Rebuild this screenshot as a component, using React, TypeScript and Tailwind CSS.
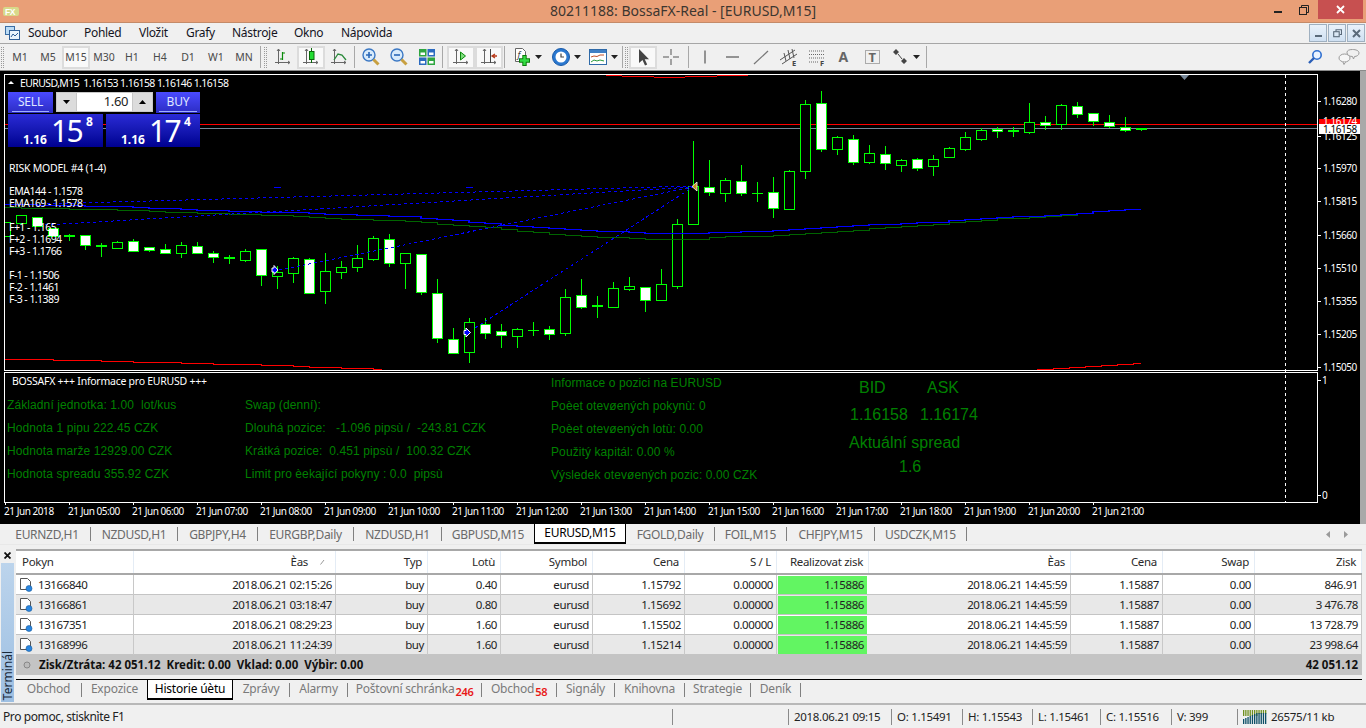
import React from "react";

type C = [number, number, number, number, string];
const candles: C[] = [
  [222,236,222,236,"h"],[215,223,215,223,"h"],[217,226,217,226,"w"],[228,236,228,236,"w"],[235,237,234,241,"d"],[235,245,235,250,"w"],[245,247,243,257,"d"],[242,248,241,249,"h"],[241,251,239,252,"w"],[247,250,247,252,"w"],[249,253,244,253,"w"],[245,253,242,258,"h"],[246,253,242,253,"w"],[253,257,251,263,"w"],[257,259,255,264,"d"],[251,260,249,262,"h"],[249,275,249,286,"w"],[272,276,266,289,"h"],[258,273,257,283,"h"],[259,293,258,293,"w"],[271,291,253,304,"h"],[267,272,261,279,"h"],[258,267,245,272,"h"],[238,259,236,261,"h"],[239,263,234,267,"w"],
  [253,263,253,289,"h"],[254,292,254,295,"w"],[293,338,279,343,"w"],[339,353,328,353,"w"],[322,352,318,363,"h"],[324,333,318,339,"w"],[331,335,324,348,"w"],[329,336,328,348,"h"],[330,331,322,336,"t"],[329,334,326,340,"w"],[297,333,289,336,"h"],[295,307,279,309,"w"],[305,307,296,318,"d"],[288,307,282,307,"h"],[286,289,277,291,"h"],[287,300,287,312,"w"],[284,300,269,301,"h"],[224,286,219,289,"h"],[186,224,141,224,"h"],[187,192,160,196,"w"],[180,193,178,202,"h"],[181,193,165,196,"w"],[193,194,182,202,"t"],[192,208,177,218,"w"],[171,209,170,210,"h"],
  [104,171,100,179,"h"],[103,149,91,152,"w"],[137,149,136,155,"h"],[139,162,135,165,"w"],[153,162,145,164,"h"],[154,163,146,170,"w"],[160,165,159,172,"h"],[159,168,158,171,"w"],[159,166,155,176,"h"],[148,157,147,157,"h"],[137,149,132,151,"h"],[130,139,128,141,"h"],[129,131,127,138,"w"],[130,132,127,137,"d"],[122,132,103,134,"h"],[122,125,116,130,"w"],[105,124,104,130,"h"],[106,114,102,118,"w"],[113,121,113,126,"w"],[122,126,115,128,"w"],[127,130,117,132,"w"],[128,130,128,131,"d"],
];

const blue: [number, number][] = [[5,204],[110,206],[177,208.7],[233,211],[287,212],[333,214],[400,216],[443,219.3],[480,222.7],[500,224.7],[527,226.3],[557,228.3],[590,230.3],[633,232.3],[667,233.3],[717,232.3],[767,230.3],[800,228.3],[860,224.7],[927,222],[993,217.3],[1060,214.3],[1093,211.3],[1141,208.3]];
const green: [number, number][] = [[5,207.3],[93,209],[157,211.3],[223,213.3],[287,215.7],[350,219],[400,220.7],[443,224],[480,226.3],[500,229.3],[533,232.3],[567,235],[607,237],[653,239],[683,239.3],[717,236.7],[767,235.3],[793,234],[860,229],[927,224],[993,218.7],[1060,214.7],[1088,212.3]];
const redL: [number, number][] = [[5,359],[62,359.6],[127,361.5],[254,364.5],[317,367],[382,369]];
const redR: [number, number][] = [[1037,369],[1141,363]];

function lerp(p: [number, number][], x: number) {
  for (let i = 1; i < p.length; i++) {
    if (x <= p[i][0]) {
      const [a, b] = p[i - 1];
      const [c, d] = p[i];
      return b + ((d - b) * (x - a)) / (c - a);
    }
  }
  return p[p.length - 1][1];
}
function steps(p: [number, number][]) {
  const end = p[p.length - 1][0];
  let d = "";
  for (let x = p[0][0]; x < end; x += 16) {
    const y = Math.round(lerp(p, x)) + 0.5;
    d += (d ? "L" : "M") + x + " " + y + "H" + Math.min(x + 16, end);
  }
  return d;
}

const axisY: [string, number][] = [["1.16280",101],["1.16125",136],["1.15970",168],["1.15815",201],["1.15660",235],["1.15510",268],["1.15355",301],["1.15205",334],["1.15050",367]];
const times = ["21 Jun 2018",...["05","06","07","08","09","10","11","12","13","14","15","16","17","18","19","20","21"].map((h) => `21 Jun ${h}:00`)];

const chartText = "[font-family:'Noto_Sans',sans-serif] text-[10px] tracking-[-0.45px] fill-white";

function ChartSvg() {
  return (
    <svg viewBox="0 71 1360 453" className="absolute inset-0 w-[1360px] h-[453px]" shapeRendering="crispEdges">
      <defs>
        <clipPath id="main"><rect x="5" y="75" width="1312" height="295" /></clipPath>
      </defs>
      <rect x="4.5" y="74.5" width="1313" height="296" fill="none" stroke="#fff" />
      <rect x="4.5" y="372.5" width="1313" height="130" fill="none" stroke="#fff" />
      <g clipPath="url(#main)">
        <path d="M5 124.5H1318" stroke="#ff0000" />
        <path d="M5 128.5H1318" stroke="#778899" />
        <path d="M606 75.5H622M622 76.5H654M654 77.5H685M685 76.5H717M717 75.5H748" stroke="#ff0000" />
        {candles.map((c, i) => {
          const x = 5 + 16 * i;
          const [t, b, h, l, k] = c;
          return (
            <g key={i}>
              <path d={`M${x + 0.5} ${h}V${l}`} stroke="#00ff00" />
              {k === "d" && <rect x={x - 5} y={t} width={11} height={2} fill="#00ff00" />}
              {k === "t" && <rect x={x - 5} y={t} width={11} height={1} fill="#00ff00" />}
              {(k === "h" || k === "w") && (
                <rect x={x - 4.5} y={t + 0.5} width={10} height={b - t} fill={k === "w" ? "#fff" : "#000"} stroke="#00ff00" />
              )}
            </g>
          );
        })}
        <path d={steps(green)} stroke="#006400" fill="none" />
        <path d={steps(blue)} stroke="#0000ff" strokeWidth="1.5" fill="none" />
        <g stroke="#0000ff" strokeDasharray="3 3" fill="none">
          <path d="M475 328L693 187" />
          <path d="M279 270L693 187" />
          <path d="M45 225L693 187" />
          <path d="M5 205L693 186" />
        </g>
        <path d="M274 187.5h7M466 187.5h7" stroke="#0000ff" />
        <path d={steps(redL)} fill="none" stroke="#ff0000" />
        <path d={steps(redR)} fill="none" stroke="#ff0000" />
        <g shapeRendering="auto">
          <path d="M272 268h2v-2.5l4 4.5-4 4.5v-2.5h-2z" fill="#0000ff" stroke="#fff" />
          <path d="M464 330.5h2v-2.5l4.5 4.5-4.5 4.5v-2.5h-2z" fill="#0000ff" stroke="#fff" />
          <path d="M692 186.5l5-4.5v9z" fill="#c8921e" stroke="#fff" strokeWidth="0.8" />
          <path d="M1180 75h9l-4.5 5z" fill="#778899" />
          <path d="M8 84l3-3 3 3z" fill="#fff" />
        </g>
      </g>
      <path d="M1285.5 75V502" stroke="#fff" strokeDasharray="3 3" />
      {axisY.map(([t, y]) => (
        <g key={t}>
          <path d={`M1318 ${y + 0.5}h3`} stroke="#fff" />
          <text x="1323" y={y + 4} className={chartText}>{t}</text>
        </g>
      ))}
      <path d="M1318 380.5h3M1318 495.5h3" stroke="#fff" />
      <text x="1322" y="384" className={chartText}>1</text>
      <text x="1322" y="499" className={chartText}>0</text>
      <rect x="1319" y="119" width="41" height="5" fill="#ff0000" />
      <text x="1323" y="125" className={chartText}>1.16174</text>
      <rect x="1319" y="124" width="41" height="10" fill="#fff" />
      <text x="1323" y="133" className="[font-family:'Noto_Sans',sans-serif] text-[10px] tracking-[-0.45px] fill-black">1.16158</text>
      {times.map((t, i) => (
        <g key={t}>
          <path d={`M${5 + 64 * i + 0.5} 502v3`} stroke="#fff" />
          <text x={i === 0 ? 4 : 4 + 64 * i} y="515" className={chartText}>{t}</text>
        </g>
      ))}
    </svg>
  );
}

function TradePanel() {
  const price = (a: string, b: string, c: string, w: string) => (
    <div className={`${w} h-[33px] flex items-start bg-linear-to-b from-[#2a2ad6] to-[#000090] text-white relative`}>
      <span className="mt-[19px] ml-[15px] text-[12px] font-bold tracking-normal leading-[14px]">{a}</span>
      <span className="mt-[-2px] ml-[4px] text-[30px] tracking-[-1.6px] leading-[38px]">{b}</span>
      <span className="mt-[1px] ml-[4px] text-[12px] font-bold leading-[14px]">{c}</span>
    </div>
  );
  return (
    <div className="absolute left-[8px] top-[21px] w-[192px] flex flex-col gap-[1px] [font-family:'Noto_Sans',sans-serif]">
      <div className="flex gap-[3px] h-[21px]">
        <div className="w-[45px] bg-linear-to-b from-[#4a4aff] to-[#2c2cc4] text-[#dfe6ff] text-[12px] tracking-[-0.2px] text-center leading-[20px] pb-[1px]"><div className="mx-[4px] border-b border-[#9fb0ff] h-[20px]">SELL</div></div>
        <div className="w-[97px] h-[20px] bg-[#c8c8c8] p-[1px] flex">
          <div className="w-[19px] bg-[#dcdcdc] flex items-center justify-center"><svg width="7" height="4"><path d="M0 0h7l-3.5 4z" fill="#000" /></svg></div>
          <div className="flex-1 bg-white text-right pr-[4px] text-[13px] text-[#222] leading-[17px] tracking-[-0.4px] mx-[1px]">1.60</div>
          <div className="w-[19px] bg-[#dcdcdc] flex items-center justify-center"><svg width="7" height="4"><path d="M0 4h7L3.5 0z" fill="#000" /></svg></div>
        </div>
        <div className="w-[44px] bg-linear-to-b from-[#4a4aff] to-[#2c2cc4] text-[#dfe6ff] text-[12px] tracking-[-0.2px] text-center leading-[20px]"><div className="mx-[3px] border-b border-[#9fb0ff] h-[20px]">BUY</div></div>
      </div>
      <div className="flex gap-[3px]">
        {price("1.16", "15", "8", "w-[95px]")}
        {price("1.16", "17", "4", "w-[94px]")}
      </div>
    </div>
  );
}

function IndicatorLabels() {
  const rows: [string, string][] = [["RISK MODEL #4 (1-4)","h-[23px] tracking-[-0.25px]"],["EMA144 - 1.1578","h-[12px]"],["EMA169 - 1.1578","h-[24px]"],["F+1 - 1.165","h-[12px]"],["F+2 - 1.1694","h-[12px]"],["F+3 - 1.1766","h-[24px]"],["F-1 - 1.1506","h-[12px]"],["F-2 - 1.1461","h-[12px]"],["F-3 - 1.1389","h-[12px]"]];
  return (
    <div className="absolute left-[9px] top-[91px] flex flex-col text-white text-[10.5px] tracking-[-0.55px] leading-[12px]">
      {rows.map(([t, h]) => <div key={t} className={h}>{t}</div>)}
    </div>
  );
}

function InfoBlocks() {
  const col = (items: string[], pos: string) => (
    <div className={`absolute ${pos} flex flex-col text-[#008000] text-[12px] tracking-[0.1px] leading-[23px] whitespace-pre [font-family:'Liberation_Sans',sans-serif]`}>
      {items.map((t) => <div key={t}>{t}</div>)}
    </div>
  );
  return (
    <>
      <div className="absolute left-[12px] top-[304px] text-white text-[10.5px] leading-[12px] tracking-[-0.25px]">BOSSAFX +++ Informace pro EURUSD +++</div>
      {col(["Základní jednotka: 1.00  lot/kus","Hodnota 1 pipu 222.45 CZK","Hodnota marže 12929.00 CZK","Hodnota spreadu 355.92 CZK"],"left-[7px] top-[323px]")}
      {col(["Swap (denní):","Dlouhá pozice:   -1.096 pipsù /  -243.81 CZK","Krátká pozice:  0.451 pipsù /  100.32 CZK","Limit pro èekající pokyny : 0.0  pipsù"],"left-[245px] top-[323px]")}
      {col(["Informace o pozici na EURUSD","Poèet otevøených pokynù: 0","Poèet otevøených lotù: 0.00","Použitý kapitál: 0.00 %","Výsledek otevøených pozic: 0.00 CZK"],"left-[551px] top-[301px]")}
      <div className="absolute left-[849px] top-[303px] w-[130px] flex flex-col text-[#008000] text-[16px] tracking-normal [font-family:'Liberation_Sans',sans-serif]">
        <div className="flex h-[27px] leading-[27px]"><span className="ml-[10px] w-[68px]">BID</span><span>ASK</span></div>
        <div className="flex h-[28px] leading-[28px]"><span className="ml-[1px] w-[70px]">1.16158</span><span>1.16174</span></div>
        <div className="h-[28px] leading-[28px] whitespace-pre">Aktuální spread</div>
        <div className="h-[20px] leading-[20px] ml-[50px]">1.6</div>
      </div>
    </>
  );
}

const Ic = ({ children, s = 20 }: { children: React.ReactNode; s?: number }) => (
  <svg width={s} height={s} viewBox="0 0 20 20" fill="none" className="shrink-0">{children}</svg>
);
const Axes = () => <path d="M5.5 2v15M2 15.5h15M4 4l1.5-2L7 4M15 14l2 1.5-2 1.5" stroke="#666" />;
const Caret = () => <svg width="7" height="4" className="ml-[3px] shrink-0"><path d="M0 0h7L3.5 4z" fill="#222" /></svg>;

function Btn({ w = "w-[28px]", active, children }: { w?: string; active?: boolean; children: React.ReactNode }) {
  return (
    <div className={`${w} h-[23px] flex items-center justify-center shrink-0 ${active ? "border-2 border-[#dcdcdc] bg-[#f9f9f9]" : ""}`}>{children}</div>
  );
}
const Sep = ({ m = "ml-[1px] mr-[2px]" }: { m?: string }) => <div className={`w-[1px] h-[22px] bg-[#a8a8a8] shrink-0 ${m}`} />;
const Grip = ({ m = "mx-[2px]" }: { m?: string }) => <div className={`w-[3px] h-[21px] shrink-0 border-x border-dotted border-[#9a9a9a] ${m}`} />;

const ToolIcons = {
  bar: <Ic><Axes /><path d="M9.5 13V5M7 12h2.5M9.5 6H12" stroke="#0a8a0a" strokeWidth="1.2" /></Ic>,
  candle: <Ic><Axes /><path d="M10.5 1v15" stroke="#0a6a0a" /><rect x="8.5" y="4.5" width="4.5" height="8" fill="#22dd33" stroke="#0a6a0a" /></Ic>,
  line: <Ic><Axes /><path d="M5 13l4-6 4 1 4 5" stroke="#2a8a3a" strokeWidth="1.3" /></Ic>,
  zin: <Ic><circle cx="8" cy="8" r="6" fill="#d8ebfb" stroke="#3b78c4" strokeWidth="1.4" /><path d="M5 8h6M8 5v6" stroke="#2a68b8" strokeWidth="1.6" /><path d="M12.5 12.5l5 5" stroke="#c8a040" strokeWidth="3" /></Ic>,
  zout: <Ic><circle cx="8" cy="8" r="6" fill="#d8ebfb" stroke="#3b78c4" strokeWidth="1.4" /><path d="M5 8h6" stroke="#2a68b8" strokeWidth="1.6" /><path d="M12.5 12.5l5 5" stroke="#c8a040" strokeWidth="3" /></Ic>,
  tile: <Ic><rect x="2" y="2" width="7.5" height="7.5" fill="#2fa640" /><rect x="10.5" y="2" width="7.5" height="7.5" fill="#2c6bc0" /><rect x="2" y="10.5" width="7.5" height="7.5" fill="#2c6bc0" /><rect x="10.5" y="10.5" width="7.5" height="7.5" fill="#2fa640" /><path d="M3.5 5.5h4.5v2.5H3.5zM12 5.5h4.5v2.5H12zM3.5 14h4.5v2.5H3.5zM12 14h4.5v2.5H12z" fill="#fff" /></Ic>,
  auto: <Ic><Axes /><path d="M9.5 5l5 4-5 4z" fill="#7fdd7f" stroke="#0a8a0a" /></Ic>,
  shift: <Ic><Axes /><path d="M11.5 2v14" stroke="#444" /><path d="M18 9h-4M16 7l-3 2 3 2" stroke="#b83a1a" strokeWidth="1.3" /></Ic>,
  order: <Ic><path d="M3.5 1.5h7l3 3v10h-10z" fill="#fff" stroke="#666" /><text x="5.5" y="11" fontSize="9" fontStyle="italic" fill="#444">f</text><path d="M12.5 8v11M7 13.5h11" stroke="#0a7a0a" strokeWidth="4.4" /><path d="M12.5 9v9M8 13.5h9" stroke="#33dd44" strokeWidth="2.4" /></Ic>,
  clock: <Ic><circle cx="10" cy="10" r="8.5" fill="#2a78d0" stroke="#1a5aa8" /><circle cx="10" cy="10" r="5.5" fill="#fff" /><path d="M10 6.5V10h3" stroke="#444" strokeWidth="1.2" /></Ic>,
  tmpl: <Ic><rect x="1.5" y="2.5" width="17" height="15" fill="#fff" stroke="#2f6aa8" /><rect x="2" y="3" width="16" height="3" fill="#3f7fc4" /><path d="M3 10l3-1 3 .5 3-1.5 4 0" stroke="#c0502a" /><path d="M3 15l3-2 3 1 3-1 4 1" stroke="#2a9a3a" /></Ic>,
  cursor: <Ic><path d="M6 2v14l3.5-3 2.5 5.5 2.2-1-2.5-5.2H16z" fill="#444" /></Ic>,
  cross: <Ic><path d="M10 2v6M10 12v6M2 10h6M12 10h6" stroke="#555" /></Ic>,
  vline: <Ic><path d="M10 3.5v13" stroke="#555" strokeWidth="1.2" /></Ic>,
  hline: <Ic><path d="M3 10h13" stroke="#555" strokeWidth="1.2" /></Ic>,
  trend: <Ic><path d="M3 17L17 4" stroke="#777" strokeWidth="1.2" /></Ic>,
  chan: <Ic><path d="M1 13L16 3M3 17L18 7M5 6l2 8M9 3l2 9M13 2l2 9" stroke="#555" /><text x="13" y="19" fontSize="7.5" fontWeight="bold" fill="#444">E</text></Ic>,
  fib: <Ic><path d="M2 4h15M2 7.5h15M2 11h15M2 15h10" stroke="#666" strokeDasharray="1 1" /><text x="13" y="19" fontSize="7.5" fontWeight="bold" fill="#444">F</text></Ic>,
  atext: <Ic><text x="3.5" y="15" fontSize="14" fontWeight="bold" fill="#666">A</text></Ic>,
  ttext: <Ic><rect x="2.5" y="3.5" width="14" height="13" stroke="#666" strokeDasharray="1 1" /><text x="5.5" y="15" fontSize="13" fontWeight="bold" fill="#666">T</text></Ic>,
  arrows: <Ic><path d="M3 5l3-3 3 3-3 3zM11 14l3-3 3 3-3 3z" fill="#444" /><path d="M8 7l4 5" stroke="#444" /></Ic>,
};

function Toolbar() {
  const periods = ["M1","M5","M15","M30","H1","H4","D1","W1","MN"];
  return (
    <div className="h-[27px] border-t border-[#a6a6a6] flex items-center shrink-0">
      <Grip m="ml-[1px] mr-[2px]" />
      <div className="flex w-[253px] shrink-0 text-[#4a4a4a] text-[10.5px] tracking-[0px] justify-start pt-[1px]">
        {periods.map((p) => <Btn key={p} active={p === "M15"}>{p}</Btn>)}
      </div>
      <Sep />
      <Grip m="ml-[1px] mr-[2px]" />
      <Btn>{ToolIcons.bar}</Btn>
      <Btn active>{ToolIcons.candle}</Btn>
      <Btn>{ToolIcons.line}</Btn>
      <Sep />
      <Btn>{ToolIcons.zin}</Btn>
      <Btn>{ToolIcons.zout}</Btn>
      <Btn>{ToolIcons.tile}</Btn>
      <Sep m="ml-[1px] mr-[4px]" />
      <Btn active>{ToolIcons.auto}</Btn>
      <Btn active>{ToolIcons.shift}</Btn>
      <Sep />
      <Btn w="w-[40px]">{ToolIcons.order}<Caret /></Btn>
      <Btn w="w-[37px]">{ToolIcons.clock}<Caret /></Btn>
      <Btn w="w-[37px]">{ToolIcons.tmpl}<Caret /></Btn>
      <Sep />
      <Grip m="mr-[1px]" />
      <Btn active>{ToolIcons.cursor}</Btn>
      <Btn>{ToolIcons.cross}</Btn>
      <Sep m="ml-[3px] mr-[2px]" />
      <Btn>{ToolIcons.vline}</Btn>
      <Btn>{ToolIcons.hline}</Btn>
      <Btn>{ToolIcons.trend}</Btn>
      <Btn>{ToolIcons.chan}</Btn>
      <Btn>{ToolIcons.fib}</Btn>
      <Btn>{ToolIcons.atext}</Btn>
      <Btn>{ToolIcons.ttext}</Btn>
      <Btn w="w-[36px]">{ToolIcons.arrows}<Caret /></Btn>
      <Sep m="ml-[3px] mr-[2px]" />
      <div className="flex-1" />
      <div className="flex items-center gap-[15px] pr-[6px]">
        <svg width="16" height="16" viewBox="0 0 16 16" fill="none"><circle cx="10" cy="6" r="4.2" stroke="#2f6fd0" strokeWidth="1.6" fill="#eaf3ff" /><path d="M7 9l-5 5" stroke="#2a5fb8" strokeWidth="2.4" /></svg>
        <svg width="22" height="16" viewBox="0 0 22 16" fill="none"><path d="M9 3.5c0-2 2-3 5.5-3s6.5 1.2 6.5 3.5-2.5 3.5-4.5 3.5l-1 2.5-1-2.5C11 7.5 9 6 9 3.5z" fill="#f0f0f0" stroke="#9a9a9a" /><ellipse cx="6.5" cy="9" rx="5.5" ry="4" fill="#f6f6f6" stroke="#9a9a9a" /><path d="M5 13l1 2.5 1.5-2.5" fill="#f6f6f6" stroke="#9a9a9a" /></svg>
      </div>
    </div>
  );
}

function TitleBar() {
  return (
    <div className="h-[23px] bg-[#e99f77] border-b border-[#c48a68] flex items-center shrink-0">
      <div className="w-[101px] shrink-0">
        <svg width="16" height="9" viewBox="0 0 16 9" className="ml-[3px]"><rect width="16" height="9" rx="2" fill="#d8d98a" /><text x="2" y="8" fontSize="8.5" fontWeight="bold" fill="#fff" fontFamily="Liberation Sans">FX</text></svg>
      </div>
      <div className="flex-1 text-center text-[14px] tracking-[0px] text-[#3c3630] leading-[22px]">80211188: BossaFX-Real - [EURUSD,M15]</div>
      <div className="w-[101px] shrink-0 flex items-start self-start h-[19px] pr-[3px]">
        <div className="w-[26px] h-[19px] flex items-center justify-center"><div className="w-[8px] h-[2px] bg-[#222] mt-[5px]" /></div>
        <div className="w-[26px] h-[19px] flex items-center justify-center"><svg width="10" height="10" fill="none" stroke="#222"><path d="M2.5 2.5V.5h7v7h-2" /><rect x=".5" y="2.5" width="7" height="7" /></svg></div>
        <div className="ml-[1px] w-[45px] h-[19px] bg-[#c75050] flex items-center justify-center"><svg width="9" height="9" stroke="#fff" strokeWidth="1.8"><path d="M1 1l7 7M8 1L1 8" /></svg></div>
      </div>
    </div>
  );
}

function MdiBtn({ children }: { children: React.ReactNode }) {
  return <div className="w-[18px] h-[18px] border border-[#9fb0c0] bg-linear-to-b from-[#eaf2fa] to-[#cfe0f2] flex items-center justify-center">{children}</div>;
}

function MenuBar() {
  const items: [string, string][] = [["Soubor","w-[56px]"],["Pohled","w-[55px]"],["Vložit","w-[47px]"],["Grafy","w-[46px]"],["Nástroje","w-[62px]"],["Okno","w-[47px]"],["Nápovìda","w-[70px]"]];
  return (
    <div className="h-[20px] flex items-center shrink-0">
      <svg width="16" height="16" viewBox="0 0 16 16" className="ml-[4px] mr-[8px]" fill="none"><rect x="1.5" y="1.5" width="9" height="8" fill="#bcdcf5" stroke="#3a6ea5" /><rect x="5.5" y="5.5" width="10" height="9" fill="#eaf4fd" stroke="#2f5f98" /><path d="M7 12l2-3 2 2 3-3" stroke="#2f5f98" /></svg>
      {items.map(([t, w]) => <div key={t} className={`${w} text-[#14141e] text-[12px] tracking-[-0.3px]`}>{t}</div>)}
      <div className="flex-1" />
      <div className="flex gap-[1px] pr-[1px]">
        <MdiBtn><div className="w-[7px] h-[2px] bg-[#5a6a7a] mt-[6px]" /></MdiBtn>
        <MdiBtn><svg width="9" height="9" fill="none" stroke="#5a6a7a" strokeWidth="1.1"><path d="M3 2.5V.7h5.5v4.8H6.5" /><rect x=".7" y="2.7" width="5.5" height="5" /></svg></MdiBtn>
        <MdiBtn><svg width="9" height="9" stroke="#5a6a7a" strokeWidth="2"><path d="M1 1l7 7M8 1L1 8" /></svg></MdiBtn>
      </div>
    </div>
  );
}

function ChartArea() {
  return (
    <div className="h-[454px] border-t border-[#8a8a8a] flex shrink-0">
      <div className="w-[1360px] relative bg-black shrink-0 overflow-hidden">
        <ChartSvg />
        <div className="absolute left-[20px] top-[6px] text-white text-[10.5px] leading-[12px] tracking-[-0.6px] whitespace-pre">EURUSD,M15  1.16153 1.16158 1.16146 1.16158</div>
        <TradePanel />
        <IndicatorLabels />
        <InfoBlocks />
      </div>
      <div className="flex-1 border-l border-[#a9a9a9] bg-[#a9a9a9]" />
    </div>
  );
}

function ChartTabs() {
  const tabs: [string, string][] = [["EURNZD,H1","w-[87px]"],["NZDUSD,H1","w-[87px]"],["GBPJPY,H4","w-[80px]"],["EURGBP,Daily","w-[96px]"],["NZDUSD,H1","w-[88px]"],["GBPUSD,M15","w-[92px]"],["EURUSD,M15","w-[92px]"],["FGOLD,Daily","w-[89px]"],["FOIL,M15","w-[72px]"],["CHFJPY,M15","w-[88px]"],["USDCZK,M15","w-[92px]"]];
  return (
    <div className="h-[21px] flex items-stretch shrink-0 pl-[4px] border-b border-[#e8e8e8] text-[12px] tracking-[-0.3px]">
      {tabs.map(([t, w], i) =>
        i === 6 ? (
          <div key={i} className={`${w} bg-white border border-t-0 border-b-2 border-black text-black flex items-center justify-center`}>{t}</div>
        ) : (
          <div key={i} className={`${w} text-[#6a6a6a] flex items-center justify-center`}>
            <span className="flex-1 text-center pt-[1px]">{t}</span>
            {i !== 5 && <span className="w-[1px] h-[14px] bg-[#808080]" />}
          </div>
        )
      )}
      <div className="flex-1" />
      <div className="flex items-center gap-[14px] pr-[18px]">
        <svg width="4" height="7"><path d="M4 0v7L0 3.5z" fill="#9a9a9a" /></svg>
        <svg width="4" height="7"><path d="M0 0v7l4-3.5z" fill="#9a9a9a" /></svg>
      </div>
    </div>
  );
}

const DocIcon = () => (
  <svg width="14" height="15" viewBox="0 0 14 15" fill="none" className="shrink-0"><path d="M1.5 1.5h7l3 3v8h-10z" fill="#fff" stroke="#555" /><circle cx="10" cy="11.5" r="3" fill="#2a86e0" stroke="#1a5a9a" strokeWidth=".6" /></svg>
);

const cols = ["Pokyn","Èas","Typ","Lotù","Symbol","Cena","S / L","Realizovat zisk","Èas","Cena","Swap","Zisk"];
const rows = [
  ["13166840","2018.06.21 02:15:26","buy","0.40","eurusd","1.15792","0.00000","1.15886","2018.06.21 14:45:59","1.15887","0.00","846.91"],
  ["13166861","2018.06.21 03:18:47","buy","0.80","eurusd","1.15692","0.00000","1.15886","2018.06.21 14:45:59","1.15887","0.00","3 476.78"],
  ["13167351","2018.06.21 08:29:23","buy","1.60","eurusd","1.15502","0.00000","1.15886","2018.06.21 14:45:59","1.15887","0.00","13 728.79"],
  ["13168996","2018.06.21 11:24:39","buy","1.60","eurusd","1.15214","0.00000","1.15886","2018.06.21 14:45:59","1.15887","0.00","23 998.64"],
];
const gridCols = "grid grid-cols-[118px_202px_92px_73px_92px_92px_92px_92px_202px_92px_92px_107px]";

function TerminalTabs() {
  const tabs: [string, string, string?][] = [["Obchod","w-[66px]"],["Expozice","w-[65px]"],["Historie úètu","w-[86px]"],["Zprávy","w-[57px]"],["Alarmy","w-[58px]"],["Poštovní schránka","w-[134px]","246"],["Obchod","w-[75px]","58"],["Signály","w-[58px]"],["Knihovna","w-[70px]"],["Strategie","w-[66px]"],["Deník","w-[50px]"]];
  return (
    <div className="h-[21px] flex items-stretch text-[12px] tracking-[-0.2px] border-t border-black">
      {tabs.map(([t, w, sub], i) =>
        i === 2 ? (
          <div key={i} className={`${w} bg-white border-x border-b-2 border-black text-black flex items-center justify-center pb-[1px]`}>{t}</div>
        ) : (
          <div key={i} className={`${w} text-[#7a7a7a] flex items-center`}>
            <span className="flex-1 text-center whitespace-nowrap pb-[2px]">{t}{sub && <span className="text-[#e81818] text-[11px] font-semibold tracking-[-0.4px] ml-[1px] relative top-[3px]">{sub}</span>}</span>
            {i !== 1 && <span className="w-[1px] h-[14px] bg-[#808080]" />}
          </div>
        )
      )}
    </div>
  );
}

function Terminal() {
  return (
    <div className="h-[158px] flex shrink-0">
      <div className="w-[16px] flex flex-col pl-[1px] pr-[2px] shrink-0">
        <div className="h-[18px] flex items-end justify-center pb-[4px]"><svg width="7" height="7" stroke="#111" strokeWidth="1.8"><path d="M.5.5l6 6M6.5.5l-6 6" /></svg></div>
        <div className="h-[139px] bg-linear-to-b from-[#bcd4ec] to-[#9dbfe2] flex items-end justify-center pb-[2px]">
          <span className="[writing-mode:vertical-rl] rotate-180 text-[12px] text-[#1a2a3a] tracking-[0px] leading-[12px]">Terminál</span>
        </div>
      </div>
      <div className="w-[1346px] flex flex-col pt-[4px] shrink-0">
        <div className={`${gridCols} h-[26px] bg-white border-t-2 border-b-2 border-[#a8a8a8] tracking-[-0.3px]`}>
          {cols.map((c, i) => (
            <div key={i} className={`border-r border-[#e4ecf5] flex items-center text-[#2a2a2a] ${i === 0 ? "pl-[6px]" : "justify-end pr-[5px]"}`}>
              {c}
              {i === 1 && <svg width="5" height="6" className="ml-[12px] mr-[5px]"><path d="M.5 5.5L4 1" stroke="#999" /></svg>}
            </div>
          ))}
        </div>
        {rows.map((r, ri) => (
          <div key={ri} className={`${gridCols} h-[20px] ${ri % 2 ? "bg-[#e8e8e8]" : "bg-white"} border-b border-[#c4c4c4]`}>
            {r.map((c, i) => (
              <div key={i} className={`border-r border-[#c8c8c8] flex items-center text-[#222] pb-[1px] ${i === 0 ? "pl-[3px] gap-[5px]" : "justify-end pr-[3px]"} ${i === 7 ? "bg-[#62f562] m-[1px] mr-[2px] pr-[2px] border-r-0" : ""} `}>
                {i === 0 && <DocIcon />}
                {c}
              </div>
            ))}
          </div>
        ))}
        <div className="h-[20px] bg-[#c4c4c4] flex items-center font-bold text-[#111] tracking-[0px] pb-[1px]">
          <svg width="8" height="8" className="ml-[7px] mr-[8px]"><circle cx="4" cy="4" r="3" fill="#bbb" stroke="#888" /></svg>
          <span className="whitespace-pre">Zisk/Ztráta: 42 051.12  Kredit: 0.00  Vklad: 0.00  Výbìr: 0.00</span>
          <span className="flex-1 text-right pr-[4px]">42 051.12</span>
        </div>
        <div className="h-[4px]" />
        <TerminalTabs />
      </div>
    </div>
  );
}

function ConnIcon() {
  const bars = Array.from({ length: 11 });
  return (
    <svg width="24" height="14" viewBox="0 0 24 14" className="mr-[4px]">
      {bars.map((_, i) => (
        <g key={i}>
          <rect x={i * 2.2} y={0} width="1.3" height={6 - (i > 6 ? 2 : 0)} fill="#6f8f1f" />
          <rect x={i * 2.2} y={Math.max(3, 9 - i)} width="1.3" height={14 - Math.max(3, 9 - i)} fill="#0c4f66" />
        </g>
      ))}
    </svg>
  );
}

function StatusBar() {
  const cells: [string, string][] = [["2018.06.21 09:15","w-[103px]"],["O: 1.15491","w-[71px]"],["H: 1.15543","w-[70px]"],["L: 1.15461","w-[68px]"],["C: 1.15516","w-[71px]"],["V: 399","w-[66px]"]];
  return (
    <div className="h-[25px] border-t-2 border-[#b8b8b8] flex items-center shrink-0 text-[#222] tracking-[-0.3px] pt-[1px]">
      <div className="w-[672px] pl-[3px] text-[12px] tracking-[-0.4px]">Pro pomoc, stisknìte F1</div>
      <div className="w-[116px] h-[16px] border-l border-[#8a8a8a]" />
      {cells.map(([t, w]) => <div key={t} className={`${w} h-[16px] border-l border-[#8a8a8a] pl-[5px] leading-[16px]`}>{t}</div>)}
      <div className="flex-1 h-[16px] border-l border-[#8a8a8a] pl-[5px] flex items-center"><ConnIcon />26575/11 kb</div>
    </div>
  );
}

export default function App() {
  return (
    <div className="w-[1366px] h-[728px] overflow-hidden flex flex-col bg-[#f0f0f0] [font-family:'Noto_Sans',sans-serif] text-[11.5px] tracking-[-0.4px]">
      <TitleBar />
      <MenuBar />
      <Toolbar />
      <ChartArea />
      <ChartTabs />
      <Terminal />
      <StatusBar />
    </div>
  );
}
